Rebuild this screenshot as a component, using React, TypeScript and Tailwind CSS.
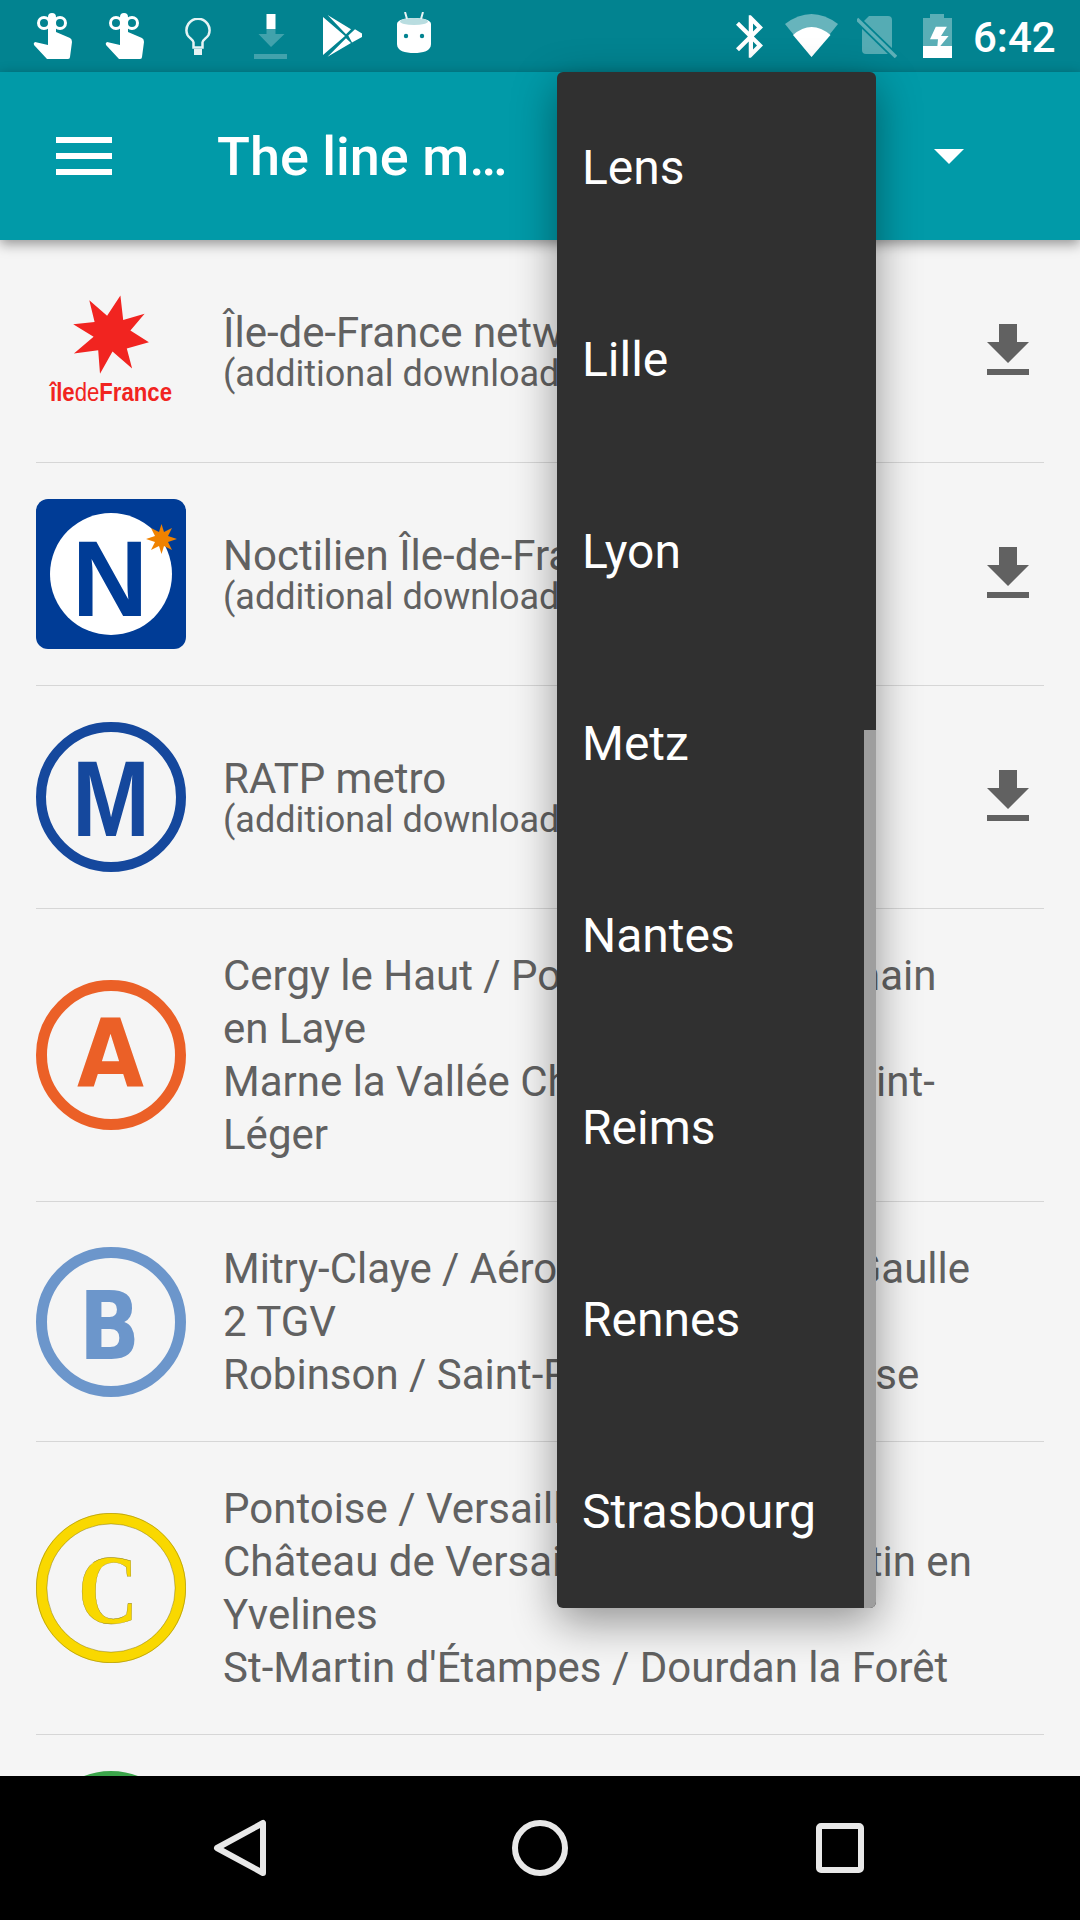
import React from "react";

const Hand = ({ className }: { className: string }) => (
  <svg viewBox="0 0 40 46" className={className}>
    <path fill="#fff" d="M15 4a4 4 0 0 1 8 0V19L37 25Q39 26 39 29L37 44Q37 46 35 46H14L1 32Q0 30 2 29L15 32Z" />
    <circle cx="11" cy="10" r="5.5" fill="none" stroke="#fff" strokeWidth="3" />
    <circle cx="27" cy="10" r="5.5" fill="none" stroke="#fff" strokeWidth="3" />
  </svg>
);

const StatusBar = () => (
  <div className="flex h-[72px] shrink-0 items-start bg-[#028390] font-['Roboto',sans-serif]">
    <Hand className="ml-[33px] mt-[13px] h-[46px] w-[40px]" />
    <Hand className="ml-[32px] mt-[13px] h-[46px] w-[40px]" />
    <svg viewBox="0 0 26 37" className="ml-[40px] mt-[18px] h-[37px] w-[26px]">
      <path fill="none" stroke="#e6f3f4" strokeWidth="2.5" d="M8.5 29.5V24.2C8.5 22 4 20 2.5 17A11.5 11.5 0 1 1 23.5 17C22 20 17.5 22 17.5 24.2V29.5Z" />
      <rect x="9" y="31" width="8" height="6" fill="#e6f3f4" />
    </svg>
    <svg viewBox="0 0 33 45" className="ml-[43px] mt-[14px] h-[45px] w-[33px]">
      <rect x="12.5" y="0" width="9" height="15" fill="#fff" />
      <path fill="#fff" fillOpacity="0.25" d="M12.5 15H21.5V20H30.5L17 33L4.5 20H12.5ZM0 40H33V45H0Z" />
    </svg>
    <svg viewBox="0 0 39 42" className="ml-[36px] mt-[15px] h-[42px] w-[39px]">
      <path fill="#fff" d="M0 2V40L22 21ZM4.6 0L28 14.3L23 19.3ZM25.3 20.5L32 14.3L39 18.5V22L29 27.5ZM4.6 41.7L23 23.3L28 28Z" />
    </svg>
    <svg viewBox="0 0 34 41" className="ml-[35px] mt-[12px] h-[41px] w-[34px]">
      <path fill="#fff" d="M0 12C0 8 8 6 17 6S34 8 34 12V32C34 39 26 41 17 41S0 39 0 32Z" />
      <ellipse cx="17" cy="9.5" rx="14" ry="3.5" fill="#b9dde0" />
      <path stroke="#e8f4f5" strokeWidth="2" d="M8 0L10 7M26 0L24 7" />
      <circle cx="9" cy="24" r="2.2" fill="#028390" />
      <circle cx="25" cy="24" r="2.2" fill="#028390" />
    </svg>
    <svg viewBox="5 2 12.71 20" className="ml-[305px] mt-[15px] h-[43px] w-[27px]">
      <path fill="#fff" d="M17.71 7.71L12 2h-1v7.59L6.41 5 5 6.41 10.59 12 5 17.59 6.41 19 11 14.41V22h1l5.71-5.71-4.3-4.29 4.3-4.29zM13 5.83l1.88 1.88L13 9.59V5.83zm1.88 10.46L13 18.17v-3.76l1.88 1.88z" />
    </svg>
    <svg viewBox="0 0 53 43" className="ml-[22px] mt-[14px] h-[43px] w-[53px]">
      <path fill="#fff" fillOpacity="0.4" d="M0 10Q26.5 -10 53 10L26.5 43Z" />
      <path fill="#fff" d="M8 21Q26.5 5 45.5 21L26.5 43Z" />
    </svg>
    <svg viewBox="0 0 40 42" className="ml-[19px] mt-[16px] h-[42px] w-[40px]">
      <path fill="#fff" fillOpacity="0.33" d="M12 0H31Q35 0 35 4V34Q35 38 31 38H9Q5 38 5 34V7Z" />
      <path stroke="#028390" strokeWidth="7" d="M0 3L39 41" />
      <path stroke="#5eb0b8" strokeWidth="3.5" d="M0 3L39 41" />
    </svg>
    <svg viewBox="0 0 29 44" className="ml-[26px] mt-[14px] h-[44px] w-[29px]">
      <path fill="#fff" fillOpacity="0.35" d="M7 0H21V4H29V32H0V4H7Z" />
      <path fill="#fff" d="M0 32H29V44H0Z" />
      <path fill="#fff" d="M12.8 12.7H23.9L18 22H25.6L14 36L15 25.3H7Z" />
    </svg>
    <span className="ml-[21px] mt-[13px] text-[42px] leading-[49px] font-medium text-white">6:42</span>
  </div>
);

const AppBar = () => (
  <div className="relative z-10 flex h-[168px] shrink-0 items-center bg-[#019aa8] font-['Roboto',sans-serif] shadow-[0_4px_12px_rgba(0,0,0,0.4)]">
    <div className="ml-[56px] flex w-[56px] flex-col gap-[10px]">
      <div className="h-[6px] bg-white" />
      <div className="h-[6px] bg-white" />
      <div className="h-[6px] bg-white" />
    </div>
    <span className="ml-[105px] w-[330px] text-[54px] font-medium leading-[63px] text-white">The line m…</span>
    <svg viewBox="0 0 30 15" className="ml-[387px] h-[15px] w-[30px]">
      <path fill="#fff" d="M0 0H30L15 15Z" />
    </svg>
  </div>
);

const Logo = ({ children }: { children: React.ReactNode }) => (
  <svg viewBox="0 0 150 150" className="h-[150px] w-[150px] shrink-0">
    {children}
  </svg>
);

const Ring = ({ color }: { color: string }) => (
  <circle cx="75" cy="75" r="69.5" fill="none" stroke={color} strokeWidth="11" />
);

const IdfLogo = () => (
  <Logo>
    <polygon fill="#f12420" points="84.4,19.6 87.2,44 108.6,37.7 94.4,54.5 112.9,66.3 90.8,72.6 96.1,92.4 76.5,75.5 64,97.8 62.2,74.3 37.9,77.6 57.6,60.8 37.2,48.2 58.6,46 53.3,24.2 71.1,39.8" />
    <text x="14" y="125" fill="#f12420" fontFamily="Liberation Sans" fontWeight="700" fontSize="25" textLength="122" lengthAdjust="spacingAndGlyphs">
      île<tspan fontWeight="400">de</tspan>France
    </text>
  </Logo>
);

const NLogo = () => (
  <Logo>
    <rect width="150" height="150" rx="12" fill="#003c96" />
    <circle cx="75" cy="75" r="61" fill="#fff" />
    <text x="36" y="117" fill="#003c96" fontFamily="Liberation Sans" fontWeight="700" fontSize="108" textLength="76" lengthAdjust="spacingAndGlyphs">N</text>
    <polygon fill="#f08200" points="125.5,25 128,33 136,29 132,37 141,40 132,43 136,51 128,47 125.5,55 123,47 115,51 119,43 110,40 119,37 115,29 123,33" />
  </Logo>
);

const MLogo = () => (
  <Logo>
    <circle cx="75" cy="75" r="70" fill="none" stroke="#15489d" strokeWidth="10" />
    <text x="36" y="114" fill="#15489d" fontFamily="Liberation Sans" fontWeight="700" fontSize="108" textLength="78" lengthAdjust="spacingAndGlyphs">M</text>
  </Logo>
);

const ALogo = () => (
  <Logo>
    <Ring color="#eb6027" />
    <text x="41" y="107" fill="#eb6027" fontFamily="DejaVu Sans" fontWeight="700" fontSize="95" textLength="67" lengthAdjust="spacingAndGlyphs">A</text>
  </Logo>
);

const BLogo = () => (
  <Logo>
    <Ring color="#6c96cb" />
    <text x="43" y="112" fill="#6c96cb" fontFamily="DejaVu Sans" fontWeight="700" fontSize="95" textLength="61" lengthAdjust="spacingAndGlyphs">B</text>
  </Logo>
);

const CLogo = () => (
  <Logo>
    <Ring color="#f9d800" />
    <circle cx="75" cy="75" r="74.7" fill="none" stroke="#8a7a10" strokeWidth="0.5" />
    <circle cx="75" cy="75" r="64.2" fill="none" stroke="#8a7a10" strokeWidth="0.5" />
    <text x="42" y="110" fill="#f9d800" stroke="#8a7a10" strokeWidth="0.4" fontFamily="Liberation Serif" fontWeight="700" fontSize="100" textLength="60" lengthAdjust="spacingAndGlyphs">C</text>
  </Logo>
);

const DownloadIcon = () => (
  <svg viewBox="0 0 24 24" className="h-[72px] w-[72px] shrink-0">
    <path fill="#616161" d="M19 9h-4V3H9v6H5l7 7 7-7zM5 18v2h14v-2H5z" />
  </svg>
);

const Row = ({
  logo,
  lines,
  sub,
  download,
}: {
  logo: React.ReactNode;
  lines: string[];
  sub?: string;
  download?: boolean;
}) => (
  <div className="mx-[36px] flex items-center border-b border-[#d6d6d6] py-[36px]">
    {logo}
    <div className="ml-[37px] min-w-0 flex-1 py-[4px] text-[#616161]">
      {lines.map((line) => (
        <div key={line} className="text-[42px] leading-[53px]">
          {line}
        </div>
      ))}
      {sub && <div className="-mt-[8px] text-[36px] leading-[46px]">{sub}</div>}
    </div>
    {download && <DownloadIcon />}
  </div>
);

const List = () => (
  <div className="min-h-0 flex-1 overflow-hidden bg-[#f5f5f5] font-['Roboto',sans-serif]">
    <Row logo={<IdfLogo />} lines={["Île-de-France network"]} sub="(additional download)" download />
    <Row logo={<NLogo />} lines={["Noctilien Île-de-France"]} sub="(additional download)" download />
    <Row logo={<MLogo />} lines={["RATP metro"]} sub="(additional download)" download />
    <Row
      logo={<ALogo />}
      lines={[
        "Cergy le Haut / Poissy / Saint Germain",
        "en Laye",
        "Marne la Vallée Chessy / Boissy Saint-",
        "Léger",
      ]}
    />
    <Row
      logo={<BLogo />}
      lines={[
        "Mitry-Claye / Aéroport Charles de Gaulle",
        "2 TGV",
        "Robinson / Saint-Rémy lès Chevreuse",
      ]}
    />
    <Row
      logo={<CLogo />}
      lines={[
        "Pontoise / Versailles Rive Gauche",
        "Château de Versailles / Saint-Quentin en",
        "Yvelines",
        "St-Martin d'Étampes / Dourdan la Forêt",
      ]}
    />
    <div className="mx-[36px] pt-[36px]">
      <div className="h-[150px] w-[150px] rounded-full bg-[#3ba54a]" />
    </div>
  </div>
);

const cities = ["Lens", "Lille", "Lyon", "Metz", "Nantes", "Reims", "Rennes", "Strasbourg"];

const Menu = () => (
  <div className="absolute left-[557px] top-[72px] z-20 h-[1536px] w-[319px] overflow-hidden rounded-[6px] bg-[#303030] font-['Roboto',sans-serif] shadow-[0_14px_44px_rgba(0,0,0,0.4)]">
    {cities.map((city) => (
      <div key={city} className="flex h-[192px] items-center pl-[25px] text-[48px] text-white">
        {city}
      </div>
    ))}
    <div className="absolute right-0 top-[658px] h-[878px] w-[12px] bg-[#9e9e9e]" />
  </div>
);

const NavBar = () => (
  <div className="relative z-30 flex h-[144px] shrink-0 items-center justify-center gap-[228px] bg-black">
    <svg viewBox="0 0 72 72" className="h-[72px] w-[72px]">
      <path fill="none" stroke="#e8e8e8" strokeWidth="6" strokeLinejoin="round" d="M13 36L59 11V61Z" />
    </svg>
    <svg viewBox="0 0 72 72" className="h-[72px] w-[72px]">
      <circle cx="36" cy="36" r="25" fill="none" stroke="#e8e8e8" strokeWidth="6" />
    </svg>
    <svg viewBox="0 0 72 72" className="h-[72px] w-[72px]">
      <rect x="15" y="14" width="42" height="44" rx="2" fill="none" stroke="#e8e8e8" strokeWidth="6" />
    </svg>
  </div>
);

export default function App() {
  return (
    <div className="relative flex h-[1920px] w-[1080px] flex-col overflow-hidden">
      <StatusBar />
      <AppBar />
      <List />
      <NavBar />
      <Menu />
    </div>
  );
}
